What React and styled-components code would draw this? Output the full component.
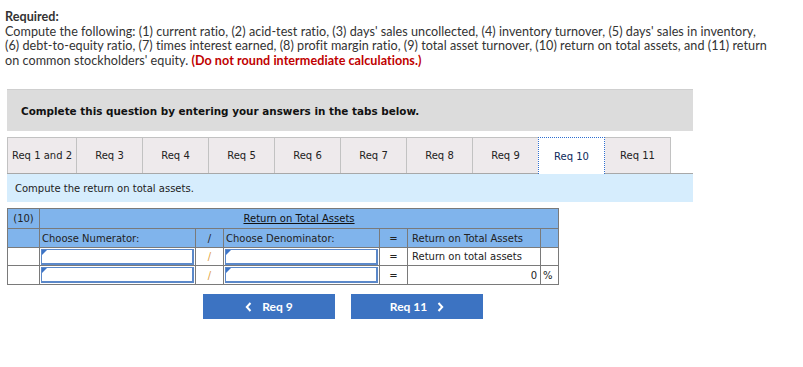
import React from "react";
import styled, { createGlobalStyle } from "styled-components";

const Global = createGlobalStyle`
  html, body { margin: 0; padding: 0; background: #fff; }
  body { font-family: Lato, "Open Sans", sans-serif; color: #222; }
`;

const Page = styled.div`
  padding: 10px 0 0 0;
  width: 803px;
  height: 367px;
  box-sizing: border-box;
`;

const Intro = styled.div`
  padding-left: 5px;
  font-family: Lato, sans-serif;
  font-size: 12.6px;
  letter-spacing: 0.04px;
  line-height: 14.6px;
  color: #333;
`;

const Strong = styled.div`
  font-weight: 700;
`;

const Red = styled.span`
  color: #c00000;
  font-weight: 700;
`;

const Main = styled.div`
  margin: 21px 0 0 7px;
  width: 686px;
`;

const Banner = styled.div`
  height: 42px;
  background: #dcdcdc;
  border-top: 1px solid #cfcfcf;
  box-sizing: border-box;
  display: flex;
  align-items: center;
  padding-left: 14px;
  font-family: "DejaVu Sans", Verdana, sans-serif;
  font-weight: 700;
  font-size: 10.4px;
  color: #111;
`;

const TabBar = styled.div`
  margin-top: 6px;
  display: flex;
  height: 37px;
  border-bottom: 1px solid #a8a8a8;
  box-sizing: border-box;
`;

const Tab = styled.div`
  width: ${(p) => p.$w}px;
  box-sizing: border-box;
  display: flex;
  align-items: center;
  justify-content: center;
  font-family: "DejaVu Sans", Verdana, sans-serif;
  font-size: 10px;
  color: ${(p) => (p.$active ? "#0c2a5c" : "#222")};
  background: ${(p) => (p.$active ? "#fff" : "#eeeaec")};
  border: ${(p) => (p.$active ? "1px dotted #2f6fd0" : "1px solid #c2c2c2")};
  border-bottom: none;
  margin-bottom: ${(p) => (p.$active ? "-1px" : "0")};
  margin-left: ${(p) => (p.$first ? "0" : "-1px")};
  position: relative;
  z-index: ${(p) => (p.$active ? 1 : 0)};
`;

const Instruction = styled.div`
  height: 28px;
  background: #d6edfd;
  display: flex;
  align-items: center;
  padding-left: 8px;
  font-family: "DejaVu Sans", Verdana, sans-serif;
  font-size: 10px;
  color: #222;
`;

const Table = styled.table`
  margin-top: 6px;
  border-collapse: collapse;
  width: 551px;
  table-layout: fixed;
  font-family: "DejaVu Sans", Verdana, sans-serif;
  font-size: 10px;
  color: #222;
`;

const Cell = styled.td`
  border: 1px solid #7a7a7a;
  padding: 0;
  height: ${(p) => p.$h || 17}px;
  box-sizing: border-box;
  background: ${(p) => (p.$head ? "#80b4ec" : "#fff")};
  text-align: ${(p) => p.$align || "left"};
  padding-left: ${(p) => (p.$pl ? p.$pl : 0)}px;
  padding-right: ${(p) => (p.$pr ? p.$pr : 0)}px;
  white-space: nowrap;
  vertical-align: middle;
`;

const Title = styled.span`
  text-decoration: underline;
  color: #111;
`;

const Field = styled.div`
  position: relative;
  height: 16px;
  margin: 0 1px;
  background: #fff;
  border: 1px solid #5b88c9;
  border-right-width: 2px;
  border-bottom-width: 2px;
  box-sizing: border-box;
`;

const Corner = styled.span`
  position: absolute;
  left: 0;
  top: 0;
  width: 0;
  height: 0;
  border-top: 5px solid #3d74c6;
  border-right: 5px solid transparent;
`;

const Slash = styled.span`
  color: #e0a040;
`;

const Buttons = styled.div`
  display: flex;
  gap: 16px;
  margin: 9px 0 0 196px;
`;

const NavButton = styled.button`
  width: 132px;
  height: 25px;
  border: none;
  background: #3c73c2;
  color: #fff;
  font-family: Lato, "Open Sans", sans-serif;
  font-weight: 700;
  font-size: 12px;
  display: flex;
  align-items: center;
  justify-content: center;
  gap: 10px;
  padding: 0;
`;

const Chevron = ({ dir }) => (
  <svg width="7" height="10" viewBox="0 0 7 10">
    <path
      d={dir === "left" ? "M5.5 1 L1.8 5 L5.5 9" : "M1.5 1 L5.2 5 L1.5 9"}
      fill="none"
      stroke="#fff"
      strokeWidth="2"
    />
  </svg>
);

const tabs = [
  "Req 1 and 2",
  "Req 3",
  "Req 4",
  "Req 5",
  "Req 6",
  "Req 7",
  "Req 8",
  "Req 9",
  "Req 10",
  "Req 11",
];

export default function App() {
  return (
    <Page>
      <Global />
      <Intro>
        <Strong>Required:</Strong>
        <div>
          Compute the following: (1) current ratio, (2) acid-test ratio, (3) days' sales uncollected, (4) inventory turnover, (5) days' sales in inventory,
        </div>
        <div>
          (6) debt-to-equity ratio, (7) times interest earned, (8) profit margin ratio, (9) total asset turnover, (10) return on total assets, and (11) return
        </div>
        <div>
          on common stockholders' equity. <Red>(Do not round intermediate calculations.)</Red>
        </div>
      </Intro>
      <Main>
        <Banner>Complete this question by entering your answers in the tabs below.</Banner>
        <TabBar>
          {tabs.map((t, i) => (
            <Tab key={t} $w={i === 0 ? 70 : 67} $first={i === 0} $active={t === "Req 10"}>
              {t}
            </Tab>
          ))}
        </TabBar>
        <Instruction>Compute the return on total assets.</Instruction>
        <Table>
          <colgroup>
            <col style={{ width: 32 }} />
            <col style={{ width: 156 }} />
            <col style={{ width: 28 }} />
            <col style={{ width: 156 }} />
            <col style={{ width: 28 }} />
            <col style={{ width: 133 }} />
            <col style={{ width: 18 }} />
          </colgroup>
          <tbody>
            <tr>
              <Cell $head $h={20} $align="center">(10)</Cell>
              <Cell $head colSpan={6} $align="center">
                <Title>Return on Total Assets</Title>
              </Cell>
            </tr>
            <tr>
              <Cell $head $h={19} />
              <Cell $head $pl={2}>Choose Numerator:</Cell>
              <Cell $head $align="center">/</Cell>
              <Cell $head $pl={2}>Choose Denominator:</Cell>
              <Cell $head $align="center">=</Cell>
              <Cell $head $pl={4}>Return on Total Assets</Cell>
              <Cell $head />
            </tr>
            <tr>
              <Cell $h={18} />
              <Cell><Field><Corner /></Field></Cell>
              <Cell $align="center"><Slash>/</Slash></Cell>
              <Cell><Field><Corner /></Field></Cell>
              <Cell $align="center">=</Cell>
              <Cell $pl={4}>Return on total assets</Cell>
              <Cell />
            </tr>
            <tr>
              <Cell $h={19} />
              <Cell><Field><Corner /></Field></Cell>
              <Cell $align="center"><Slash>/</Slash></Cell>
              <Cell><Field><Corner /></Field></Cell>
              <Cell $align="center">=</Cell>
              <Cell $align="right" $pr={3}>0</Cell>
              <Cell $pl={2}>%</Cell>
            </tr>
          </tbody>
        </Table>
        <Buttons>
          <NavButton>
            <Chevron dir="left" />
            Req 9
          </NavButton>
          <NavButton>
            Req 11
            <Chevron dir="right" />
          </NavButton>
        </Buttons>
      </Main>
    </Page>
  );
}
